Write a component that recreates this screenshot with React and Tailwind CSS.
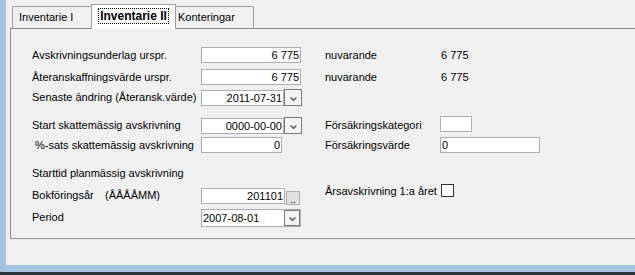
import React from 'react';

const font = { fontFamily: '"Liberation Sans", Arial, sans-serif' };

const Chevron = () => (
  <svg width="9" height="6" viewBox="0 0 9 6" className="mt-[3px]">
    <path d="M1.5 1.5 L4.5 4.2 L7.5 1.5" fill="none" stroke="#555555" strokeWidth="1.4" />
  </svg>
);

const DropButton = ({ tall }) => (
  <div
    className={`flex items-center justify-center border border-[#7a7a7a] bg-[#f4f4f4] ${tall ? 'w-[16px] h-[16px]' : 'w-[18px] h-[17px]'}`}
  >
    <Chevron />
  </div>
);

const TextBox = ({ value, width = 'w-[100px]', align = 'text-right', height = 'h-[16px]' }) => (
  <div
    className={`${width} ${height} bg-white border border-[#abadb3] ${align} px-[1px] leading-[14px] text-[11px] text-black`}
  >
    {value}
  </div>
);

const Row = ({ label, className = '', labelClass = '', children, right }) => (
  <div className={`flex items-center ${className}`}>
    <div className={`w-[169px] shrink-0 ${labelClass}`}>{label}</div>
    <div className="w-[124px] shrink-0 flex items-center">{children}</div>
    <div className="flex items-center">{right}</div>
  </div>
);

export default function App() {
  return (
    <div className="w-[635px] h-[275px] flex flex-col bg-[#a6c3dd] overflow-hidden text-[11px] text-black" style={font}>
      <div className="flex h-[265px]">
        <div className="w-[6px] shrink-0" />
        <div className="flex-1 bg-[#f0f0f0] flex flex-col pl-[4px]">
          {/* tabs */}
          <div className="flex items-end h-[29px] pl-[2px] -mb-[1px] relative z-10">
            <div className="w-[79px] h-[22px] mb-[1px] border-t border-l border-[#a0a0a0] bg-[#f0f0f0] pl-[6px] pt-[4px] leading-[12px]">
              Inventarie I
            </div>
            <div className="w-[85px] h-[25px] border-t border-l border-r border-[#a0a0a0] bg-white flex justify-center pt-[3px]">
              <span className="font-bold text-[12px] leading-[14px] px-[1px] h-[16px] border border-dotted border-black">
                Inventarie II
              </span>
            </div>
            <div className="w-[78px] h-[22px] mb-[1px] border-t border-r border-[#a0a0a0] bg-[#f0f0f0] pl-[2px] pt-[4px] leading-[12px]">
              Konteringar
            </div>
          </div>
          {/* panel */}
          <div className="h-[211px] border-t border-l border-b border-[#8c8c94] bg-[#f0f0f0]">
            <div className="h-full border-b border-white pl-[21px] pt-[18px] flex flex-col">
              <Row
                label="Avskrivningsunderlag urspr."
                right={<><span className="w-[116px]">nuvarande</span><span>6 775</span></>}
              >
                <TextBox value="6 775" />
              </Row>
              <Row
                className="mt-[5px]"
                label="Återanskaffningsvärde urspr."
                right={<><span className="w-[116px]">nuvarande</span><span>6 775</span></>}
              >
                <TextBox value="6 775" />
              </Row>
              <Row className="mt-[4px]" label="Senaste ändring (Återansk.värde)">
                <div className="flex items-center">
                  <TextBox value="2011-07-31" width="w-[83px]" />
                  <DropButton />
                </div>
              </Row>
              <Row
                className="mt-[11px]"
                label="Start skattemässig avskrivning"
                right={
                  <>
                    <span className="w-[115px]">Försäkringskategori</span>
                    <div className="w-[32px] h-[16px] bg-white border border-[#abadb3] -mt-[3px]" />
                  </>
                }
              >
                <div className="flex items-center">
                  <TextBox value="0000-00-00" width="w-[83px]" />
                  <DropButton />
                </div>
              </Row>
              <Row
                className="mt-[3px]"
                label="%-sats skattemässig avskrivning"
                labelClass="pl-[3px]"
                right={
                  <>
                    <span className="w-[115px]">Försäkringsvärde</span>
                    <TextBox value="0" width="w-[100px]" align="text-left" />
                  </>
                }
              >
                <TextBox value="0" width="w-[81px]" />
              </Row>
              <div className="mt-[12px] h-[14px] leading-[14px]">Starttid planmässig avskrivning</div>
              <Row
                className="mt-[8px] items-start"
                label={<span className="flex h-[16px] items-center"><span className="w-[73px]">Bokföringsår</span>(ÅÅÅÅMM)</span>}
                right={
                  <div className="flex items-center -mt-[5px]">
                    <span className="mr-[4px]">Årsavskrivning 1:a året</span>
                    <div className="w-[13px] h-[13px] bg-white border border-[#333333]" />
                  </div>
                }
              >
                <div className="flex items-start">
                  <TextBox value="201101" width="w-[84px]" />
                  <div className="ml-[1px] mt-[3px] w-[14px] h-[14px] bg-[#e1e1e1] border border-[#adadad] flex items-end justify-center leading-[8px] text-[10px]">
                    ..
                  </div>
                </div>
              </Row>
              <Row className="mt-[4px]" label="Period">
                <div className="w-[100px] h-[18px] bg-white border border-[#abadb3] flex items-center justify-between pl-[1px] pr-[0px]">
                  <span className="leading-[14px]">2007-08-01</span>
                  <DropButton tall />
                </div>
              </Row>
            </div>
          </div>
        </div>
      </div>
      <div className="h-[7px] bg-[#a6c3dd]" />
      <div className="h-[3px] bg-[#2c3338]" />
    </div>
  );
}
